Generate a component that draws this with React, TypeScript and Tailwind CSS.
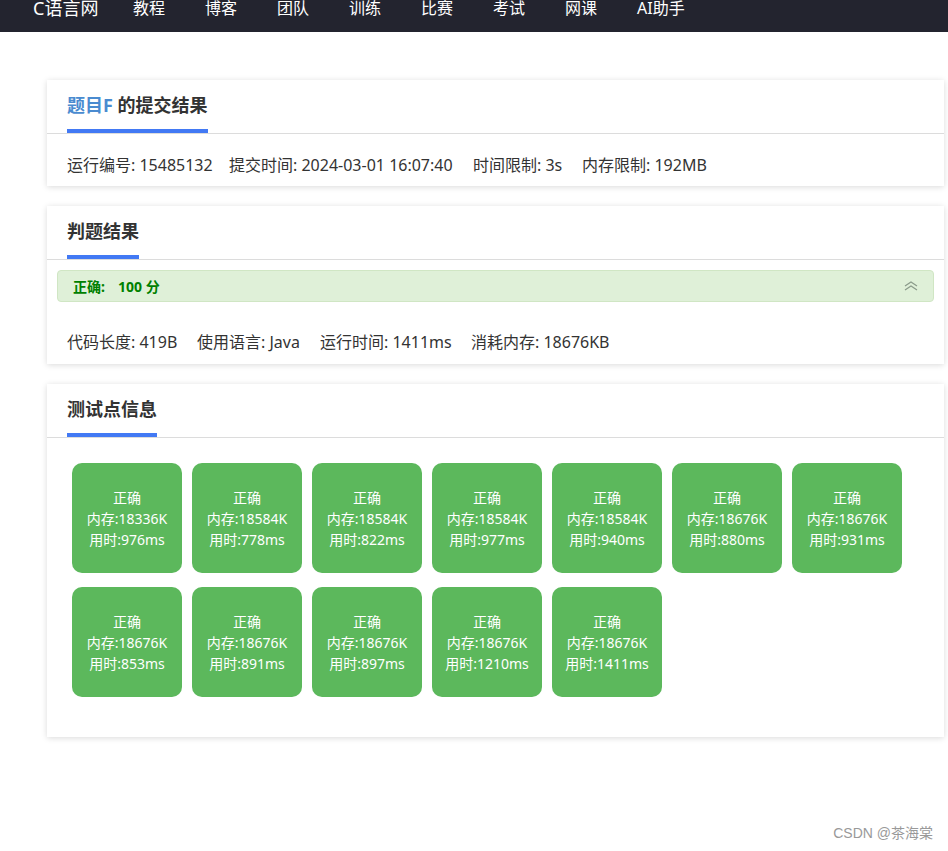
import React from "react";

const nav = ["教程", "博客", "团队", "训练", "比赛", "考试", "网课", "AI助手"];

const tests: [string, string][] = [
  ["18336", "976"],
  ["18584", "778"],
  ["18584", "822"],
  ["18584", "977"],
  ["18584", "940"],
  ["18676", "880"],
  ["18676", "931"],
  ["18676", "853"],
  ["18676", "891"],
  ["18676", "897"],
  ["18676", "1210"],
  ["18676", "1411"],
];

function CardHeader({ children, width }: { children: React.ReactNode; width: string }) {
  return (
    <div className="border-b border-[#dcdcdc] px-5 h-[54px] flex items-end">
      <div className={`relative h-full flex items-center ${width}`}>
        <h3 className="text-[18px] font-bold text-[#333] leading-none -mt-[4px]">{children}</h3>
        <div className="absolute left-0 right-0 bottom-0 h-[4px] bg-[#4279f4]" />
      </div>
    </div>
  );
}

export default function App() {
  return (
    <div
      className="w-[948px] h-[851px] bg-white relative overflow-hidden text-[#333]"
      style={{ fontFamily: '"Noto Sans", "Noto Sans CJK SC", sans-serif' }}
    >
      <div className="h-[32px] bg-[#23242f] flex items-start text-white text-[16px]">
        <div className="ml-[33px] w-[100px] text-[18px] leading-[16px]">C语言网</div>
        {nav.map((n) => (
          <div key={n} className="w-[72px] leading-[17px]">
            {n}
          </div>
        ))}
      </div>

      <div className="pl-[47px] pr-[4px] pt-[48px] flex flex-col gap-[20px]">
        <div className="bg-white shadow-[0_1px_6px_rgba(0,0,0,0.15)] h-[106px]">
          <CardHeader width="w-[141px]">
            <span className="text-[#4a8bd0]">题目F</span> 的提交结果
          </CardHeader>
          <div className="px-5 pt-[20px] text-[16px] leading-[22px] flex">
            <span className="w-[162px]">运行编号: 15485132</span>
            <span className="w-[244px]">提交时间: 2024-03-01 16:07:40</span>
            <span className="w-[109px]">时间限制: 3s</span>
            <span>内存限制: 192MB</span>
          </div>
        </div>

        <div className="bg-white shadow-[0_1px_6px_rgba(0,0,0,0.15)] h-[158px]">
          <CardHeader width="w-[72px]">判题结果</CardHeader>
          <div className="mx-[10px] mt-[10px] h-[32px] rounded-[4px] bg-[#dff0d8] border border-[#d0e6c4] flex items-center px-[15px] justify-between">
            <span className="text-[14px] font-bold text-[#008000] flex">
              <span className="w-[45px]">正确:</span>
              <span>100 分</span>
            </span>
            <svg width="16" height="12" viewBox="0 0 16 12" className="mr-[-1px]">
              <path d="M2 6 L8 2 L14 6" fill="none" stroke="#8a9a8a" strokeWidth="1.2" />
              <path d="M2 10 L8 6 L14 10" fill="none" stroke="#8a9a8a" strokeWidth="1.2" />
            </svg>
          </div>
          <div className="px-5 pt-[29px] text-[16px] leading-[22px] flex">
            <span className="w-[130px]">代码长度: 419B</span>
            <span className="w-[123px]">使用语言: Java</span>
            <span className="w-[151px]">运行时间: 1411ms</span>
            <span>消耗内存: 18676KB</span>
          </div>
        </div>

        <div className="bg-white shadow-[0_1px_6px_rgba(0,0,0,0.15)] h-[353px]">
          <CardHeader width="w-[90px]">测试点信息</CardHeader>
          <div className="pl-[25px] pt-[25px] flex flex-wrap gap-x-[10px] gap-y-[14px] w-[860px]">
            {tests.map(([m, t], i) => (
              <div
                key={i}
                className="w-[110px] h-[110px] rounded-[10px] bg-[#5cb85c] text-white text-[14px] leading-[21px] flex flex-col items-center justify-center"
              >
                <span>正确</span>
                <span className="whitespace-nowrap">内存:{m}K</span>
                <span className="whitespace-nowrap">用时:{t}ms</span>
              </div>
            ))}
          </div>
        </div>
      </div>

      <div
        className="absolute right-[15px] top-[823px] text-[14px] text-[#999]"
        style={{ fontFamily: '"Liberation Sans", "Noto Sans CJK SC", sans-serif' }}
      >
        CSDN @茶海棠
      </div>
    </div>
  );
}
